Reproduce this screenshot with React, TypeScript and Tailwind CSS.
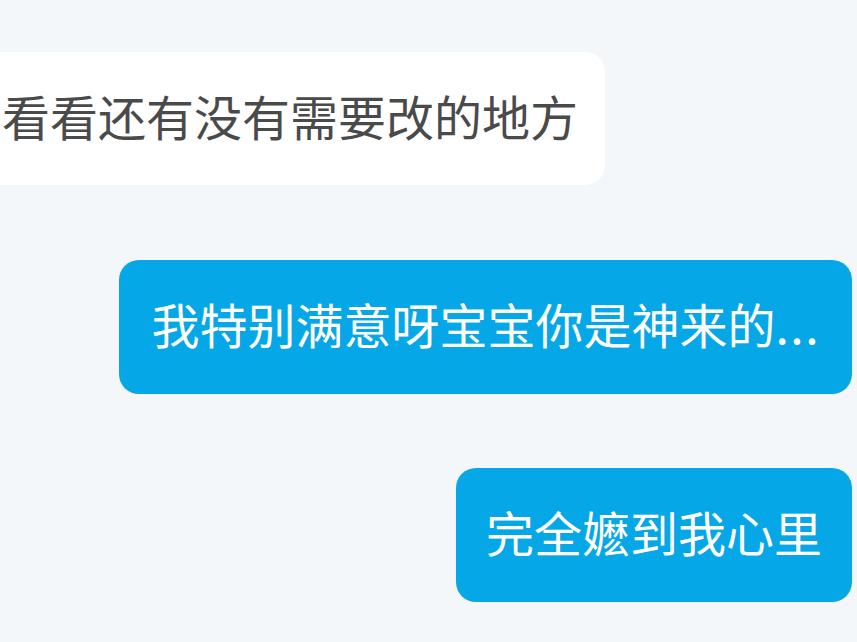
export default function App() {
  const font = { fontFamily: '"Noto Sans CJK SC", "Noto Sans", sans-serif' };

  return (
    <div
      className="w-[857px] h-[642px] overflow-hidden bg-[#f4f7f9] flex flex-col gap-[75px] pt-[52px] pr-[5px]"
      style={font}
    >
      {/* incoming */}
      <div className="flex justify-start">
        <div className="-ml-[30px] bg-white rounded-[20px] h-[133px] pl-[32px] pr-[27px] pb-[8px] flex items-center text-[48px] leading-none font-normal text-[#4a4a4a] whitespace-nowrap">
          看看还有没有需要改的地方
        </div>
      </div>

      {/* outgoing */}
      <div className="flex justify-end">
        <div className="bg-[#06a7e6] rounded-[20px] h-[134px] px-[32px] pb-[8px] flex items-center text-[48px] leading-none font-normal text-white whitespace-nowrap">
          我特别满意呀宝宝你是神来的<span className="tracking-[1.5px]">...</span>
        </div>
      </div>

      <div className="flex justify-end -mt-[1px]">
        <div className="bg-[#06a7e6] rounded-[20px] h-[134px] px-[30px] pb-[8px] flex items-center text-[48px] leading-none font-normal text-white whitespace-nowrap">
          完全嬷到我心里
        </div>
      </div>
    </div>
  );
}
